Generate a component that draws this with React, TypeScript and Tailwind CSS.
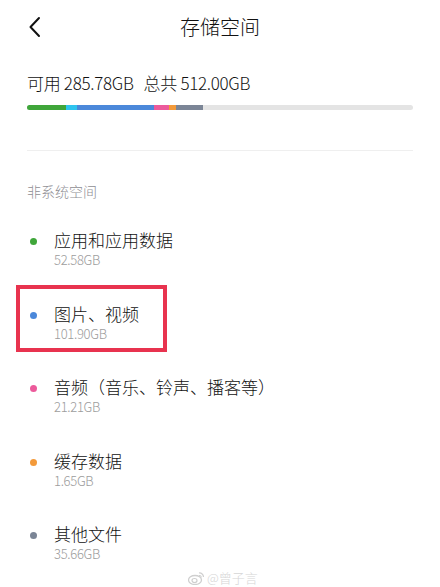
import React from "react";

const segs = [
  { w: 39, c: "bg-[#3fa63a]" },
  { w: 11, c: "bg-[#2ec4ef]" },
  { w: 77, c: "bg-[#4b88da]" },
  { w: 15, c: "bg-[#ec5a9b]" },
  { w: 7, c: "bg-[#f39a3a]" },
  { w: 27, c: "bg-[#7b8596]" },
];

const items = [
  { name: "应用和应用数据", size: "52.58GB", dot: "bg-[#3fa63a]" },
  { name: "图片、视频", size: "101.90GB", dot: "bg-[#4b88da]", boxed: true },
  { name: "音频（音乐、铃声、播客等）", size: "21.21GB", dot: "bg-[#ec5a9b]" },
  { name: "缓存数据", size: "1.65GB", dot: "bg-[#f39a3a]" },
  { name: "其他文件", size: "35.66GB", dot: "bg-[#7b8596]" },
];

const font = { fontFamily: '"Noto Sans CJK SC", "Noto Sans", sans-serif' };

export default function App() {
  return (
    <div className="relative w-[440px] h-[587px] overflow-hidden bg-white text-[#111] font-light" style={font}>
      {/* header */}
      <div className="grid grid-cols-[1fr_auto_1fr] items-center h-[54px] px-[27px]">
        <svg width="14" height="22" viewBox="0 0 14 22" className="ml-[1px]">
          <path d="M11 2 L2.5 11 L11 20" fill="none" stroke="#111" strokeWidth="2" strokeLinecap="round" strokeLinejoin="round" />
        </svg>
        <div className="text-[20px] leading-none">存储空间</div>
        <div />
      </div>

      {/* summary */}
      <div className="px-[27px] pt-[17px]">
        <div className="text-[17px] leading-[24px] tracking-[-0.3px] whitespace-nowrap">
          可用 285.78GB<span className="ml-[10px]">总共 512.00GB</span>
        </div>
        <div className="mt-[10px] flex h-[5px] w-full overflow-hidden rounded-full bg-[#e4e4e4]">
          {segs.map((s, i) => (
            <div key={i} className={`h-full ${s.c}`} style={{ width: s.w }} />
          ))}
        </div>
        <div className="mt-[40px] h-px bg-[#efefef]" />
        <div className="mt-[30px] text-[14px] leading-[20px] text-[#8e8e93]">非系统空间</div>
      </div>

      {/* list */}
      <div className="flex flex-col pt-[28px]">
        {items.map((it, i) => (
          <div key={i} className="h-[73.5px] px-[16px]">
            <div
              className={`flex w-[151px] items-start border-[4px] -mt-[18px] pt-[14px] ${
                it.boxed ? "border-[#e8334f] h-[67px] pl-[10px]" : "border-transparent pl-[10px]"
              }`}
            >
              <div className={`mt-[9px] h-[7px] w-[7px] shrink-0 rounded-full ${it.dot}`} />
              <div className="ml-[17px] whitespace-nowrap">
                <div className="pt-[1px] text-[17px] leading-[20px]">{it.name}</div>
                <div className="mt-[3px] text-[13px] leading-[14px] text-[#9c9c9c] tracking-[-0.3px]">{it.size}</div>
              </div>
            </div>
          </div>
        ))}
      </div>

      {/* watermark */}
      <div className="absolute left-[188px] top-[570px] flex items-center gap-[2px] text-[#d6d6d6]">
        <svg width="17" height="14" viewBox="0 0 17 14">
          <ellipse cx="7" cy="9" rx="6.5" ry="4.5" fill="none" stroke="#cfcfcf" strokeWidth="1.3" />
          <ellipse cx="6.5" cy="9.5" rx="2.5" ry="2" fill="none" stroke="#cfcfcf" strokeWidth="1.2" />
          <path d="M11 2 A4 4 0 0 1 15.5 6" fill="none" stroke="#cfcfcf" strokeWidth="1.2" />
          <path d="M11 4.5 A1.8 1.8 0 0 1 13.2 6.5" fill="none" stroke="#cfcfcf" strokeWidth="1.1" />
        </svg>
        <span className="text-[13px] leading-[15px]">@曾子言</span>
      </div>
    </div>
  );
}
